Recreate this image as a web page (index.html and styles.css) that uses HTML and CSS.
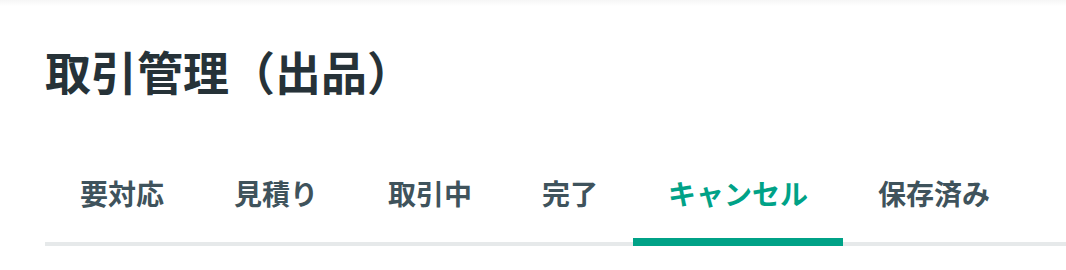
FILE: index.html
```html
<!DOCTYPE html>
<html lang="ja">
<head>
<meta charset="utf-8">
<link rel="stylesheet" href="styles.css">
</head>
<body>
<div class="topbar"></div>
<main class="page">
  <h1 class="title">取引管理（出品）</h1>
  <nav class="tabs">
    <div class="tab">要対応</div>
    <div class="tab">見積り</div>
    <div class="tab">取引中</div>
    <div class="tab">完了</div>
    <div class="tab active">キャンセル</div>
    <div class="tab">保存済み</div>
  </nav>
</main>
</body>
</html>
```
FILE: styles.css
```css
html, body {
  margin: 0;
  padding: 0;
  background: #ffffff;
}
body {
  font-family: "Noto Sans CJK JP", "Noto Sans", sans-serif;
  width: 1066px;
  height: 270px;
  overflow: hidden;
}
.topbar {
  height: 6px;
  background: linear-gradient(to bottom, #f6f6f6, #ffffff);
}
.page {
  padding-left: 45px;
}
.title {
  margin: 34px 0 0 0;
  font-size: 46px;
  line-height: 60px;
  font-weight: 700;
  color: #263238;
}
.tabs {
  display: flex;
  margin-top: 73px;
  height: 73px;
  background: linear-gradient(to top, #e6e9ea 4px, transparent 4px);
}
.tab {
  box-sizing: border-box;
  height: 73px;
  padding: 0 35px;
  font-size: 28px;
  line-height: 40px;
  font-weight: 700;
  color: #3f535c;
  border-bottom: 8px solid transparent;
}
.tab.active {
  color: #00a287;
  border-bottom-color: #00a287;
}
```
